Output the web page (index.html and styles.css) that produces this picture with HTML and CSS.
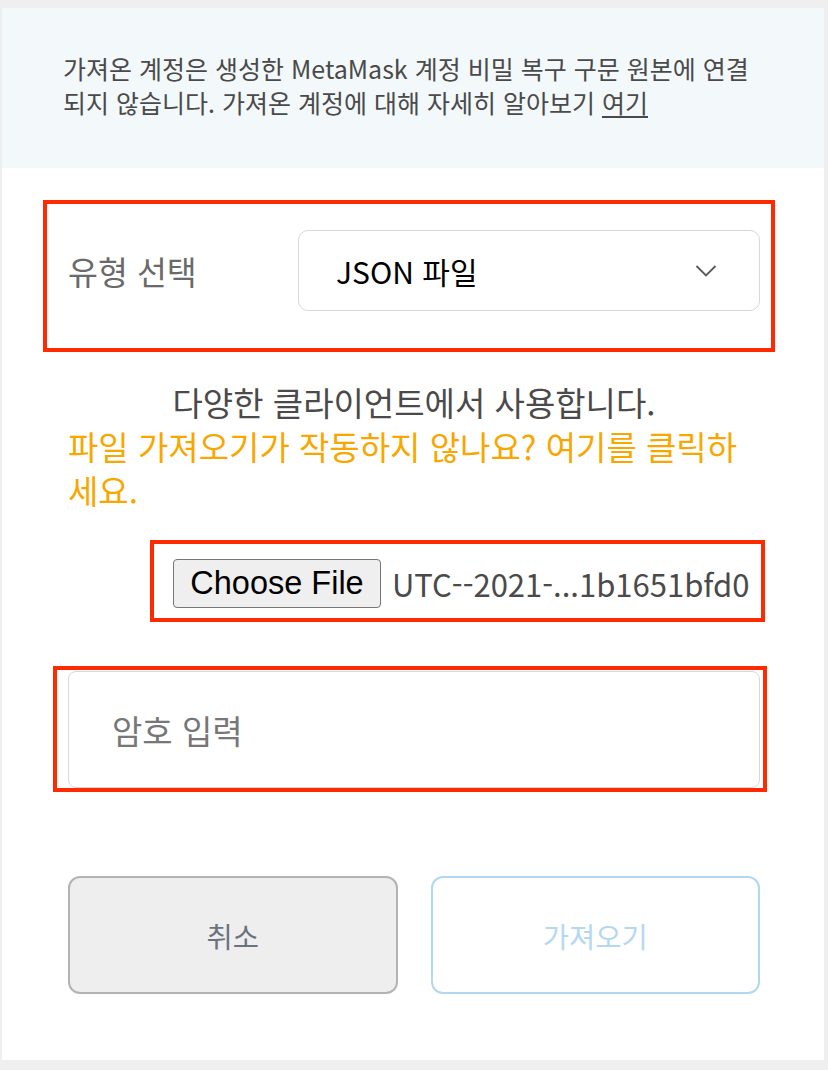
FILE: index.html
```html
<!DOCTYPE html>
<html lang="ko">
<head>
<meta charset="utf-8">
<link rel="stylesheet" href="styles.css">
</head>
<body>
<div class="panel">
  <div class="banner">
    <p>가져온 계정은 생성한 MetaMask 계정 비밀 복구 구문 원본에 연결되지 않습니다. 가져온 계정에 대해 자세히 알아보기 <a href="#" class="link">여기</a></p>
  </div>
  <div class="content">
    <div class="mark mark-select">
      <span class="type-label">유형 선택</span>
      <div class="dropdown">
        <span class="dropdown-value">JSON 파일</span>
        <svg class="chevron" width="22" height="14" viewBox="0 0 22 14"><path d="M1.5 2 L11 11.5 L20.5 2" fill="none" stroke="#535a61" stroke-width="1.8"/></svg>
      </div>
    </div>
    <p class="desc">다양한 클라이언트에서 사용합니다.</p>
    <p class="warn">파일 가져오기가 작동하지 않나요? 여기를 클릭하세요.</p>
    <div class="mark mark-file">
      <span class="file-btn">Choose File</span>
      <span class="file-name">UTC--2021-...1b1651bfd0</span>
    </div>
    <div class="mark mark-pass">
      <div class="pass-input"><span class="placeholder">암호 입력</span></div>
    </div>
    <div class="actions">
      <button class="btn btn-cancel">취소</button>
      <button class="btn btn-import">가져오기</button>
    </div>
  </div>
</div>
</body>
</html>
```

FILE: styles.css
```css
html, body {
  margin: 0;
  padding: 0;
}
body {
  background: #efefef;
  font-family: "Noto Sans CJK KR", "Noto Sans", sans-serif;
  width: 828px;
  height: 1070px;
  overflow: hidden;
}
.panel {
  margin: 8px 4px 0 2px;
  width: 822px;
  background: #fff;
  padding-bottom: 66px;
}
.banner {
  background: #f3f8fa;
  height: 160px;
  box-sizing: border-box;
  padding: 43px 60px 0 61px;
}
.banner p {
  margin: 0;
  font-size: 25px;
  line-height: 34px;
  color: #4a4a4a;
}
.link {
  display: inline-block;
  line-height: 34px;
  color: #4a4a4a;
  text-decoration: underline;
  text-underline-offset: 3px;
}
.content {
  padding: 0 64px 0 66px;
}
.mark {
  border: 4px solid #ff2a00;
}
.mark-select {
  margin: 32px -15px 0 -25px;
  padding: 26px 11px 37px 21px;
  display: flex;
  align-items: center;
}
.type-label {
  flex: 1;
  font-size: 32.5px;
  color: #6a6a6a;
}
.dropdown {
  width: 462px;
  height: 81px;
  box-sizing: border-box;
  border: 1.5px solid #d6d9dc;
  border-radius: 10px;
  display: flex;
  align-items: center;
  padding: 0 42px 0 37px;
}
.dropdown-value {
  flex: 1;
  font-size: 30px;
  color: #000;
}
.desc {
  margin: 28px 0 0;
  text-align: center;
  font-size: 33px;
  line-height: 44px;
  color: #4a4a4a;
}
.warn {
  margin: 0;
  font-size: 33px;
  line-height: 44px;
  color: #f7a700;
}
.mark-file {
  margin: 28px -5px 0 82px;
  padding: 15px 0 10px 19px;
  display: flex;
  align-items: center;
  gap: 11px;
}
.file-btn {
  box-sizing: border-box;
  width: 208px;
  height: 49px;
  background: #efefef;
  border: 1.5px solid #767676;
  border-radius: 4px;
  font-family: "Liberation Sans", Arial, sans-serif;
  font-size: 32.5px;
  color: #000;
  display: flex;
  align-items: center;
  justify-content: center;
  white-space: nowrap;
}
.file-name {
  font-size: 31px;
  color: #4a4a4a;
  white-space: nowrap;
}
.mark-pass {
  margin: 44px -7px 0 -15px;
  padding: 1px 3px 0 11px;
}
.pass-input {
  height: 117px;
  box-sizing: border-box;
  border: 1.5px solid #d6d9dc;
  border-radius: 8px;
  display: flex;
  align-items: center;
  padding-left: 43px;
}
.placeholder {
  font-size: 33px;
  color: #777;
}
.actions {
  margin-top: 84px;
  display: flex;
  gap: 33px;
}
.btn {
  flex: 1;
  height: 118px;
  border-radius: 12px;
  font-family: "Noto Sans CJK KR", sans-serif;
  font-size: 28.5px;
  padding: 0;
}
.btn-cancel {
  background: #eeeeee;
  border: 2px solid #b3b3b3;
  color: #6a737d;
}
.btn-import {
  background: #fff;
  border: 2px solid #b2d7f1;
  color: #b4d8f2;
}
```
